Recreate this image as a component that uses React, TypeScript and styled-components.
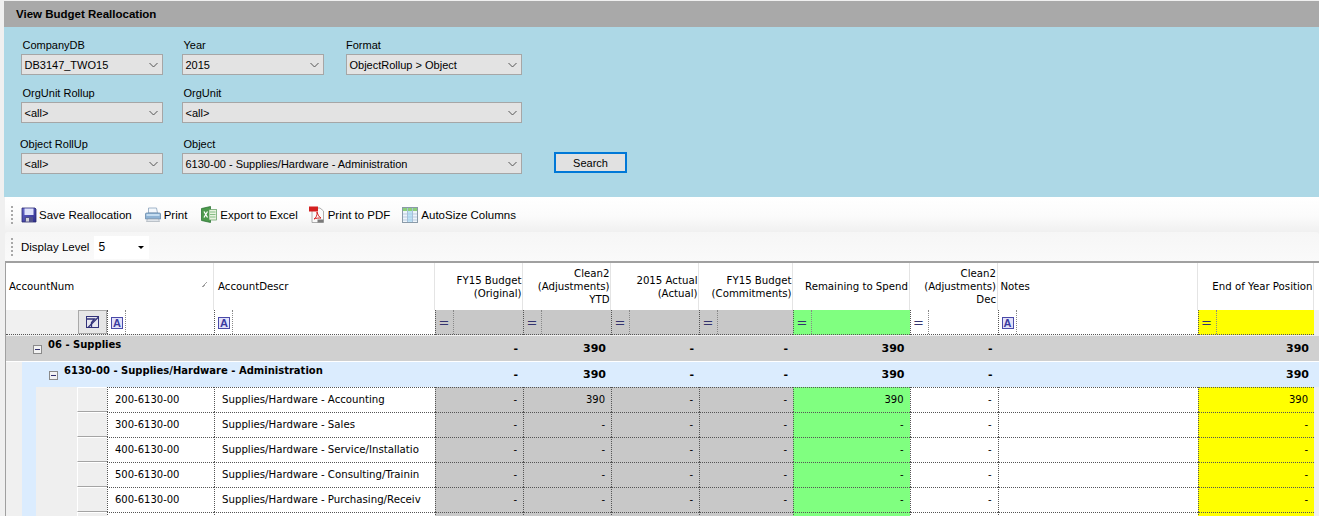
import React from "react";
import styled, { createGlobalStyle } from "styled-components";

const COLS = "208px 221px 88px 88px 88px 94px 116.5px 88px 200px 116.5px";
const UI = `"Liberation Sans", Arial, sans-serif`;
const GRID = `"DejaVu Sans", Verdana, sans-serif`;

const Global = createGlobalStyle`
  html, body { margin: 0; padding: 0; background: #f0f0f0; overflow: hidden; }
  #root { width: 1319px; height: 516px; overflow: hidden; }
`;

const Page = styled.div`
  width: 1319px; height: 516px; padding: 1px 0 0 4px; box-sizing: border-box;
  overflow: hidden; color: #000; font-family: ${UI}; font-size: 11.5px;
`;
const Title = styled.div`
  height: 26px; background: #a9a9a9; padding-left: 12px; display: flex; align-items: center;
  font-weight: bold; font-size: 11.5px;
`;
const Panel = styled.div`
  height: 170px; box-sizing: border-box; background: #add8e6; padding: 11px 0 0 17px;
  display: flex; flex-direction: column;
`;
const FormRow = styled.div<{ $top: number; $cols: string }>`
  display: grid; grid-template-columns: ${(p) => p.$cols}; align-items: end;
  margin-top: ${(p) => p.$top}px;
`;
const Field = styled.div<{ $w?: number }>`
  display: flex; flex-direction: column;
  ${(p) => (p.$w ? `width: ${p.$w}px;` : "")}
`;
const Label = styled.label<{ $shift?: number }>`
  height: 16px; line-height: 14px; font-size: 11px; padding-left: ${(p) => 1.5 + (p.$shift || 0)}px;
  white-space: nowrap; margin-left: ${(p) => ((p.$shift || 0) < -1.5 ? -1 : 0)}px;
`;
const SelectBox = styled.div`
  height: 21px; box-sizing: border-box; background: #e3e3e3; border: 1px solid #a6a6a6;
  display: flex; align-items: center; justify-content: space-between; padding: 0 4px 0 2.5px;
  font-size: 11px; white-space: nowrap;
`;
const Search = styled.button`
  width: 73px; height: 21px; box-sizing: border-box; background: #e1e1e1; border: 2px solid #0078d7;
  font-family: ${UI}; font-size: 11px; padding: 0; margin-bottom: 1px; color: #000;
`;

const Toolbar = styled.div`
  height: 35px; box-sizing: border-box; margin-left: 1px;
  background: linear-gradient(#ffffff 0%, #fbfbfb 55%, #f0f0f0 100%);
  display: flex; align-items: center; padding-left: 6px;
`;
const Toolbar2 = styled.div`
  height: 30px; box-sizing: border-box; margin-left: 1px; border-radius: 3px 3px 0 0;
  background: linear-gradient(#f6f6f6, #fafafa);
  display: flex; align-items: center; padding-left: 6px;
`;
const Grip = styled.span`
  width: 2px; height: 18px; margin-right: 8px; flex: none;
  background: repeating-linear-gradient(#a8a8a8 0 2px, transparent 2px 4px);
`;
const ToolItem = styled.div<{ $gap: number; $inner?: number }>`
  display: flex; align-items: center; gap: ${(p) => p.$inner ?? 3}px; margin-right: ${(p) => p.$gap}px;
  font-size: 11.5px; white-space: nowrap;
  & > svg { flex: none; }
`;
const LevelBox = styled.div`
  margin-left: 5px; width: 55px; height: 23px; box-sizing: border-box; background: #fff;
  display: flex; align-items: center; justify-content: space-between; padding: 0 5px 0 4px;
  font-size: 12px;
`;
const Caret = styled.span`
  width: 0; height: 0; border-left: 3px solid transparent; border-right: 3px solid transparent;
  border-top: 3px solid #000;
`;

const Table = styled.div`
  margin-left: 1px; border-left: 1px solid #a0a0a0; border-top: 2px solid #a0a0a0; margin-top: -1px;
  font-family: ${GRID}; font-size: 10.2px; background: #f0f0f0; width: 1314px;
`;
const HeadRow = styled.div`
  display: grid; grid-template-columns: ${COLS}; height: 47px; background: #fff;
`;
const Head = styled.div<{ $right?: boolean; $left?: number }>`
  display: flex; align-items: center; box-sizing: border-box; position: relative;
  justify-content: ${(p) => (p.$right ? "flex-end" : "flex-start")};
  text-align: ${(p) => (p.$right ? "right" : "left")};
  padding: 0 0.5px 0 ${(p) => p.$left ?? 3}px; line-height: 13px; border-right: 1px solid #e4e4e4; white-space: pre-line;
`;
const SortMark = styled.span`
  position: absolute; right: 6px; top: 19px; width: 5px; height: 5px;
  background: linear-gradient(135deg, transparent 45%, #a0a0a0 45% 60%, transparent 60%);
`;
const FilterRow = styled.div`
  display: grid; grid-template-columns: ${COLS}; height: 25px;
`;
const FilterFirst = styled.div`
  display: flex; justify-content: flex-end; background: #f0f0f0; border-bottom: 1px dotted #555;
`;
const SelectorBtn = styled.div`
  width: 29px; height: 24px; box-sizing: border-box; background: #e6e6e6; border: 1px solid #a9a9a9;
  display: flex; align-items: center; justify-content: center;
`;
const FilterText = styled.div<{ $w: number }>`
  width: ${(p) => p.$w}px; flex: none; background: #fff; box-sizing: border-box;
  border-left: 1px dotted #555; display: flex;
`;
const FilterCell = styled.div<{ $bg?: string }>`
  display: flex; box-sizing: border-box; background: ${(p) => p.$bg || "#fff"};
  border-left: 1px dotted #555; border-bottom: 1px dotted #555;
`;
const OpBox = styled.div`
  width: 18px; flex: none; box-sizing: border-box; border-right: 1px dotted #888;
  display: flex; align-items: center; justify-content: center; color: #33336e;
  font-size: 13px; padding-right: 1px;
`;
const AIcon = styled.span`
  width: 12px; height: 12px; box-sizing: border-box; border: 1px solid #4a4aa8; background: #e2e2fa;
  color: #3a3aa0; font: bold 11px/10px ${UI}; text-align: center; display: block; margin: 7px 3px 0 3px;
  overflow: hidden;
`;
const ASlot = styled.div`
  width: 18px; flex: none; box-sizing: border-box; border-right: 1px dotted #888;
`;

const GroupRow = styled.div`
  margin-top: 1px; display: grid; grid-template-columns: ${COLS}; height: 25px; background: #d0d0d0;
  border-bottom: 1px solid #fff; font-weight: bold; box-sizing: content-box;
`;
const SubRow = styled.div`
  display: grid; grid-template-columns: ${COLS}; height: 25px; font-weight: bold;
  background: linear-gradient(90deg, #f0f0f0 16px, #dbecfe 16px);
`;
const TitleCell = styled.div<{ $indent: number }>`
  grid-column: 1 / span 2; display: flex; align-items: flex-start; padding-left: ${(p) => p.$indent}px;
  font-size: 10px; white-space: nowrap;
`;
const Expander = styled.span`
  width: 9px; height: 9px; box-sizing: border-box; border: 1px solid #8a8a8a; background: #f2f2f2;
  margin-top: 9px; margin-right: 6px; position: relative; flex: none;
  &::after { content: ""; position: absolute; left: 1px; right: 1px; top: 3px; height: 1px; background: #303070; }
`;
const TitleText = styled.span`
  line-height: 13px; padding-top: 1.5px;
`;
const Num = styled.div`
  display: flex; align-items: center; justify-content: flex-end; padding: 0 5px 1px 0; font-size: 11px;
`;
const DataRow = styled.div`
  display: grid; grid-template-columns: ${COLS}; height: 25px;
`;
const First = styled.div`
  display: flex; background: #f0f0f0;
`;
const Gutter = styled.div`
  width: 16px; flex: none; background: #f0f0f0;
`;
const BlueGutter = styled.div`
  width: 14px; flex: none; background: #dbecfe;
`;
const Spacer = styled.div`
  width: 41px; flex: none; background: #efefef;
`;
const RowSel = styled.div`
  width: 30px; flex: none; box-sizing: border-box; background: #efefef;
  border-top: 1px solid #fff; border-left: 1px solid #fff; border-bottom: 1px solid #a4a4a4;
`;
const Account = styled.div`
  flex: 1; box-sizing: border-box; background: #fff; border-left: 1px dotted #555; border-top: 1px dotted #555;
  padding-left: 7px; line-height: 24px; white-space: nowrap; overflow: hidden;
  font-size: 10px;
`;
const Desc = styled.div`
  box-sizing: border-box; background: #fff; border-left: 1px dotted #555; border-top: 1px dotted #555;
  padding-left: 7px; line-height: 23px; white-space: nowrap; overflow: hidden;
`;
const Val = styled.div<{ $bg: string }>`
  box-sizing: border-box; background: ${(p) => p.$bg}; border-left: 1px dotted #555; border-top: 1px dotted #555;
  text-align: right; padding-right: 6px; line-height: 24px; font-size: 10px;
`;

const Chevron = () => (
  <svg width="9" height="6" viewBox="0 0 9 6" fill="none" stroke="#555" strokeWidth="1">
    <path d="M.5 1l4 4 4-4" />
  </svg>
);
const Floppy = () => (
  <svg width="16" height="16" viewBox="0 0 16 16">
    <defs>
      <linearGradient id="fl" x1="0" y1="0" x2="1" y2="1">
        <stop offset="0" stopColor="#6a6ad0" />
        <stop offset="1" stopColor="#2c2c8a" />
      </linearGradient>
    </defs>
    <path d="M1 1h13l1 1v13H1z" fill="url(#fl)" stroke="#28286e" strokeWidth=".8" />
    <rect x="3.500" y="1.500" width="9" height="6.500" fill="#dfe2fa" />
    <rect x="4" y="10" width="8" height="5" fill="#50508a" />
    <rect x="5" y="11" width="3" height="3.500" fill="#d0d0d8" />
  </svg>
);
const Printer = () => (
  <svg width="16" height="16" viewBox="0 0 16 16">
    <path d="M3.500 1h8l1 5H3.500z" fill="#f4f8fc" stroke="#8aa2bc" strokeWidth=".8" />
    <path d="M.5 7q0-1 1-1h13q1 0 1 1v5H.5z" fill="#8db2d4" stroke="#6b8bab" strokeWidth=".8" />
    <rect x="1.500" y="7" width="13" height="2" fill="#c4dcf0" />
    <path d="M2.500 12h11l1 2.500H1.500z" fill="#dfe4ea" stroke="#9aa4ae" strokeWidth=".6" />
  </svg>
);
const Excel = () => (
  <svg width="16" height="17" viewBox="0 0 16 17">
    <path d="M.5 2.500l9-2v16l-9-2z" fill="#4c9a4c" stroke="#1f6a2a" strokeWidth=".7" />
    <rect x="8" y="3.500" width="7.500" height="10.500" fill="#e8f3e0" stroke="#5c9a5c" strokeWidth=".7" />
    <path d="M9 6h5.500M9 8.500h5.500M9 11h5.500" stroke="#7ab87a" strokeWidth=".9" />
    <path d="M3 5.500l3.500 6M6.500 5.500l-3.500 6" stroke="#fff" strokeWidth="1.300" />
  </svg>
);
const Pdf = () => (
  <svg width="16" height="17" viewBox="0 0 16 17">
    <path d="M3 2h8l3.500 3v11.500H3z" fill="#fafafa" stroke="#9a9a9a" strokeWidth=".8" />
    <rect x="0" y="0.500" width="9" height="5" fill="#d42020" />
    <path d="M5 13c2-1 3.500-4 3-7 1 3 2 5 4 6-2 0-5 0-7 1z" fill="none" stroke="#d42020" strokeWidth="1" />
    <rect x="8.500" y="13.500" width="6" height="3" fill="#7a7a7a" />
  </svg>
);
const TableIcon = () => (
  <svg width="16" height="16" viewBox="0 0 16 16">
    <rect x=".5" y=".5" width="15" height="15" fill="#eef4fa" stroke="#8a9aa8" />
    <rect x="1" y="1" width="14" height="3" fill="#8ccf7a" />
    <path d="M1 7h14M1 10h14M1 13h14" stroke="#b8cbe0" />
    <path d="M5.500 1v14M10.500 1v14" stroke="#a8c0d8" />
    <rect x="6" y="4" width="4" height="11" fill="#9fd4f0" opacity=".6" />
  </svg>
);
const ClearFilter = () => (
  <svg width="13" height="12" viewBox="0 0 13 12" fill="none">
    <rect x=".5" y=".5" width="12" height="11" fill="#e8e8f0" stroke="#33337a" />
    <path d="M1 3h7.500L5.500 6.500v5" stroke="#33337a" strokeWidth="1.300" />
    <path d="M2 11.500L12.500 1" stroke="#33337a" strokeWidth="1.300" />
  </svg>
);

const FilterBg: (string | undefined)[] = ["#c8c8c8", "#c8c8c8", "#c8c8c8", "#c8c8c8", "#80ff80", undefined];

const rows = [
  ["200-6130-00", "Supplies/Hardware - Accounting", "390", "-"],
  ["300-6130-00", "Supplies/Hardware - Sales", "-", "-"],
  ["400-6130-00", "Supplies/Hardware - Service/Installatio", "-", "-"],
  ["500-6130-00", "Supplies/Hardware - Consulting/Trainin", "-", "-"],
  ["600-6130-00", "Supplies/Hardware - Purchasing/Receiv", "-", "-"],
  ["", "", "", ""],
];

const Totals = () => (
  <>
    <Num>-</Num>
    <Num>390</Num>
    <Num>-</Num>
    <Num>-</Num>
    <Num>390</Num>
    <Num>-</Num>
    <Num />
    <Num>390</Num>
  </>
);

export default function App() {
  return (
    <Page>
      <Global />
      <Title>View Budget Reallocation</Title>
      <Panel>
        <FormRow $top={0} $cols="161px 164px 176px">
          <Field $w={142}><Label>CompanyDB</Label><SelectBox>DB3147_TWO15<Chevron /></SelectBox></Field>
          <Field $w={142}><Label>Year</Label><SelectBox>2015<Chevron /></SelectBox></Field>
          <Field><Label $shift={-1.5}>Format</Label><SelectBox>ObjectRollup &gt; Object<Chevron /></SelectBox></Field>
        </FormRow>
        <FormRow $top={11} $cols="161px 340px">
          <Field $w={142}><Label>OrgUnit Rollup</Label><SelectBox>&lt;all&gt;<Chevron /></SelectBox></Field>
          <Field><Label>OrgUnit</Label><SelectBox>&lt;all&gt;<Chevron /></SelectBox></Field>
        </FormRow>
        <FormRow $top={14} $cols="161px 340px 32px 73px">
          <Field $w={142}><Label $shift={-2}>Object RollUp</Label><SelectBox>&lt;all&gt;<Chevron /></SelectBox></Field>
          <Field><Label>Object</Label><SelectBox>6130-00 - Supplies/Hardware - Administration<Chevron /></SelectBox></Field>
          <span />
          <Search>Search</Search>
        </FormRow>
      </Panel>
      <Toolbar>
        <Grip />
        <ToolItem $gap={13} $inner={2}><Floppy />Save Reallocation</ToolItem>
        <ToolItem $gap={14}><Printer />Print</ToolItem>
        <ToolItem $gap={11}><Excel />Export to Excel</ToolItem>
        <ToolItem $gap={12}><Pdf />Print to PDF</ToolItem>
        <ToolItem $gap={0}><TableIcon />AutoSize Columns</ToolItem>
      </Toolbar>
      <Toolbar2>
        <Grip />
        Display Level
        <LevelBox>5<Caret /></LevelBox>
      </Toolbar2>
      <Table>
        <HeadRow>
          <Head>AccountNum<SortMark /></Head>
          <Head $left={4}>AccountDescr</Head>
          <Head $right>{"FY15 Budget\n(Original)"}</Head>
          <Head $right>{"Clean2\n(Adjustments)\nYTD"}</Head>
          <Head $right>{"2015 Actual\n(Actual)"}</Head>
          <Head $right>{"FY15 Budget\n(Commitments)"}</Head>
          <Head $right>Remaining to Spend</Head>
          <Head $right>{"Clean2\n(Adjustments)\nDec"}</Head>
          <Head>Notes</Head>
          <Head $right>End of Year Position</Head>
        </HeadRow>
        <FilterRow>
          <FilterFirst>
            <SelectorBtn><ClearFilter /></SelectorBtn>
            <FilterText $w={107}><ASlot><AIcon>A</AIcon></ASlot></FilterText>
          </FilterFirst>
          <FilterCell><ASlot><AIcon>A</AIcon></ASlot></FilterCell>
          {FilterBg.map((bg, i) => (
            <FilterCell key={i} $bg={bg}><OpBox>=</OpBox></FilterCell>
          ))}
          <FilterCell><ASlot><AIcon>A</AIcon></ASlot></FilterCell>
          <FilterCell $bg="#ffff00"><OpBox>=</OpBox></FilterCell>
        </FilterRow>
        <GroupRow>
          <TitleCell $indent={27}><Expander /><TitleText>06 - Supplies</TitleText></TitleCell>
          <Totals />
        </GroupRow>
        <SubRow>
          <TitleCell $indent={43}><Expander /><TitleText>6130-00 - Supplies/Hardware - Administration</TitleText></TitleCell>
          <Totals />
        </SubRow>
        {rows.map((r, i) => (
          <DataRow key={i}>
            <First>
              <Gutter /><BlueGutter /><Spacer /><RowSel />
              <Account>{r[0]}</Account>
            </First>
            <Desc>{r[1]}</Desc>
            <Val $bg="#c8c8c8">{r[3]}</Val>
            <Val $bg="#c8c8c8">{r[2]}</Val>
            <Val $bg="#c8c8c8">{r[3]}</Val>
            <Val $bg="#c8c8c8">{r[3]}</Val>
            <Val $bg="#80ff80">{r[2]}</Val>
            <Val $bg="#ffffff">{r[3]}</Val>
            <Val $bg="#ffffff" />
            <Val $bg="#ffff00">{r[2]}</Val>
          </DataRow>
        ))}
      </Table>
    </Page>
  );
}
